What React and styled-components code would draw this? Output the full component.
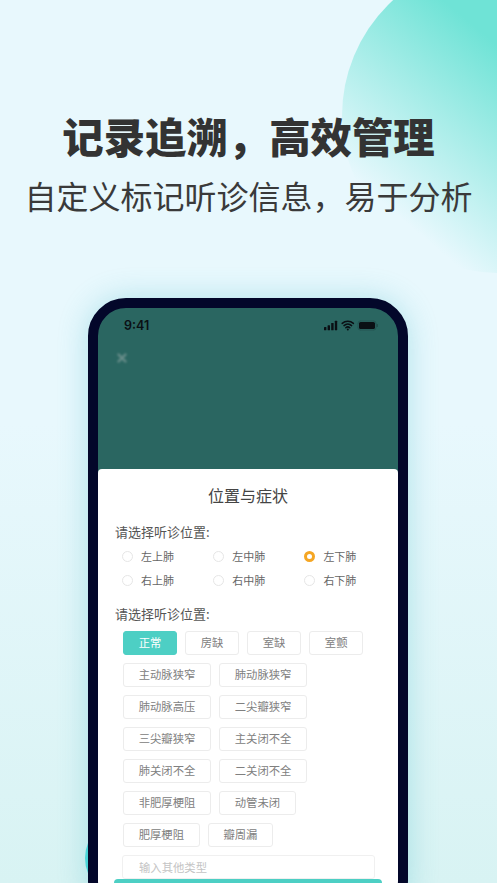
import React from 'react';
import styled, { createGlobalStyle } from 'styled-components';

const GlobalStyle = createGlobalStyle`
  html, body {
    margin: 0;
    padding: 0;
    overflow: hidden;
  }
  * {
    box-sizing: border-box;
  }
`;

const Page = styled.div`
  position: relative;
  width: 497px;
  height: 883px;
  overflow: hidden;
  display: flex;
  flex-direction: column;
  align-items: center;
  background: linear-gradient(180deg, #e8f8fd 48%, #d8f3f3 100%);
  font-family: 'Noto Sans CJK SC', 'Noto Sans', sans-serif;
`;

const TopCircle = styled.div`
  position: absolute;
  left: 342px;
  top: -41px;
  width: 314px;
  height: 314px;
  border-radius: 50%;
  background: linear-gradient(40deg, #e8f8fd 18%, #6fe3d6 62%);
`;

const BottomCircle = styled.div`
  position: absolute;
  left: 85px;
  top: 819px;
  width: 78px;
  height: 78px;
  border-radius: 50%;
  background: #4fdcdc;
`;

const Headline = styled.h1`
  position: relative;
  margin: 107px 0 0;
  font-size: 41.4px;
  line-height: 56px;
  font-weight: 900;
  color: #333333;
  white-space: nowrap;
`;

const Subline = styled.p`
  position: relative;
  margin: 10px 0 0;
  font-size: 32px;
  line-height: 44px;
  font-weight: 400;
  color: #3a3a3a;
  white-space: nowrap;
`;

const Phone = styled.div`
  position: relative;
  flex: none;
  width: 320px;
  height: 620px;
  margin: 81px 1px 0 0;
  border: 10px solid #03072a;
  border-radius: 38px;
  background: #2a6661;
  box-shadow: 0 0 30px rgba(60, 185, 195, 0.32);
  overflow: hidden;
`;

const ScreenTop = styled.div`
  height: 161px;
  padding: 9px 20px 0 26px;
`;

const StatusBar = styled.div`
  display: flex;
  align-items: center;
  justify-content: space-between;
  height: 16px;
  font-family: 'Inter', 'Liberation Sans', sans-serif;
  font-size: 12.5px;
  font-weight: 600;
  color: #0a0f14;
`;

const CloseMark = styled.svg`
  display: block;
  width: 12px;
  height: 12px;
  margin: 19px 0 0 -8px;
  filter: blur(1px);
  opacity: 0.4;
`;

const Sheet = styled.div`
  height: 460px;
  padding-top: 14px;
  border-radius: 4px 4px 0 0;
  background: #ffffff;
`;

const SheetTitle = styled.h2`
  margin: 0;
  font-size: 16px;
  line-height: 24px;
  font-weight: 400;
  text-align: center;
  color: #444444;
`;

const SectionLabel = styled.div`
  margin: ${(p) => p.$top}px 0 0 17px;
  font-size: 13px;
  line-height: 20px;
  color: #555555;
`;

const RadioGrid = styled.div`
  display: grid;
  grid-template-columns: repeat(3, 91.2px);
  grid-auto-rows: 24px;
  margin: 2px 0 0 24px;
`;

const RadioItem = styled.div`
  display: flex;
  align-items: center;
  gap: 8px;
  font-size: 11px;
  color: #666666;
`;

const RadioDot = styled.span`
  flex: none;
  width: 11px;
  height: 11px;
  border-radius: 50%;
  background: #ffffff;
  border: ${(p) => (p.$checked ? '3px solid #f5a623' : '1px solid #e6e6e6')};
`;

const ChipWrap = styled.div`
  display: flex;
  flex-wrap: wrap;
  gap: 8px;
  width: 253px;
  margin: 7px 0 0 25px;
`;

const Chip = styled.div`
  height: 24px;
  padding: 0 14.7px;
  border-radius: 3px;
  border: 1px solid ${(p) => (p.$active ? '#4dcfc4' : '#ececec')};
  background: ${(p) => (p.$active ? '#4dcfc4' : '#ffffff')};
  color: ${(p) => (p.$active ? '#ffffff' : '#808080')};
  font-size: 11.33px;
  line-height: 21px;
  white-space: nowrap;
`;

const OtherInput = styled.input`
  display: block;
  width: 253px;
  height: 24px;
  margin: 8px 0 0 24px;
  padding: 0 16px;
  border: 1px solid #f0f0f0;
  border-radius: 3px;
  background: #ffffff;
  font-family: inherit;
  font-size: 11.33px;
  outline: none;

  &::placeholder {
    color: #c4c4c4;
  }
`;

const SubmitBar = styled.div`
  width: 268px;
  height: 40px;
  margin-left: 16px;
  border-radius: 4px;
  background: #4dcfc4;
`;

const StatusIcons = () => (
  <svg width="54" height="11" viewBox="0 0 54 11">
    <rect x="0" y="7" width="2.4" height="3.2" rx="0.5" fill="#0a0f14" />
    <rect x="3.6" y="5.2" width="2.4" height="5" rx="0.5" fill="#0a0f14" />
    <rect x="7.2" y="3" width="2.4" height="7.2" rx="0.5" fill="#0a0f14" />
    <rect x="10.8" y="0.8" width="2.4" height="9.4" rx="0.5" fill="#0a0f14" />
    <path
      d="M18.2 3.4a8.4 8.4 0 0 1 11.2 0M20 5.6a5.6 5.6 0 0 1 7.6 0M21.8 7.8a2.9 2.9 0 0 1 4 0"
      fill="none"
      stroke="#0a0f14"
      strokeWidth="1.5"
      strokeLinecap="round"
    />
    <circle cx="23.8" cy="9.5" r="1" fill="#0a0f14" />
    <rect x="35" y="2" width="16" height="7" rx="1.6" fill="#0a0f14" />
    <rect x="34" y="1" width="18" height="9" rx="2.4" fill="none" stroke="#0a0f14" strokeOpacity="0.18" />
    <rect x="52.6" y="4" width="1.2" height="3" rx="0.5" fill="#0a0f14" fillOpacity="0.3" />
  </svg>
);

const radios = ['左上肺', '左中肺', '左下肺', '右上肺', '右中肺', '右下肺'];

const chips = [
  '正常', '房缺', '室缺', '室颤', '主动脉狭窄', '肺动脉狭窄', '肺动脉高压', '二尖瓣狭窄',
  '三尖瓣狭窄', '主关闭不全', '肺关闭不全', '二关闭不全', '非肥厚梗阻', '动管未闭', '肥厚梗阻', '瓣周漏',
];

const App = () => {
  return (
    <Page>
      <GlobalStyle />
      <TopCircle />
      <BottomCircle />
      <Headline>记录追溯，高效管理</Headline>
      <Subline>自定义标记听诊信息，易于分析</Subline>
      <Phone>
        <ScreenTop>
          <StatusBar>
            <span>9:41</span>
            <StatusIcons />
          </StatusBar>
          <CloseMark viewBox="0 0 12 12">
            <path d="M2.5 2.5l7 7M9.5 2.5l-7 7" stroke="#c9c9c9" strokeWidth="2.4" strokeLinecap="round" />
          </CloseMark>
        </ScreenTop>
        <Sheet>
          <SheetTitle>位置与症状</SheetTitle>
          <SectionLabel $top={15}>请选择听诊位置:</SectionLabel>
          <RadioGrid>
            {radios.map((name) => (
              <RadioItem key={name}>
                <RadioDot $checked={name === '左下肺'} />
                {name}
              </RadioItem>
            ))}
          </RadioGrid>
          <SectionLabel $top={12}>请选择听诊位置:</SectionLabel>
          <ChipWrap>
            {chips.map((name) => (
              <Chip key={name} $active={name === '正常'}>{name}</Chip>
            ))}
          </ChipWrap>
          <OtherInput placeholder="输入其他类型" readOnly />
          <SubmitBar />
        </Sheet>
      </Phone>
    </Page>
  );
};

export default App;
